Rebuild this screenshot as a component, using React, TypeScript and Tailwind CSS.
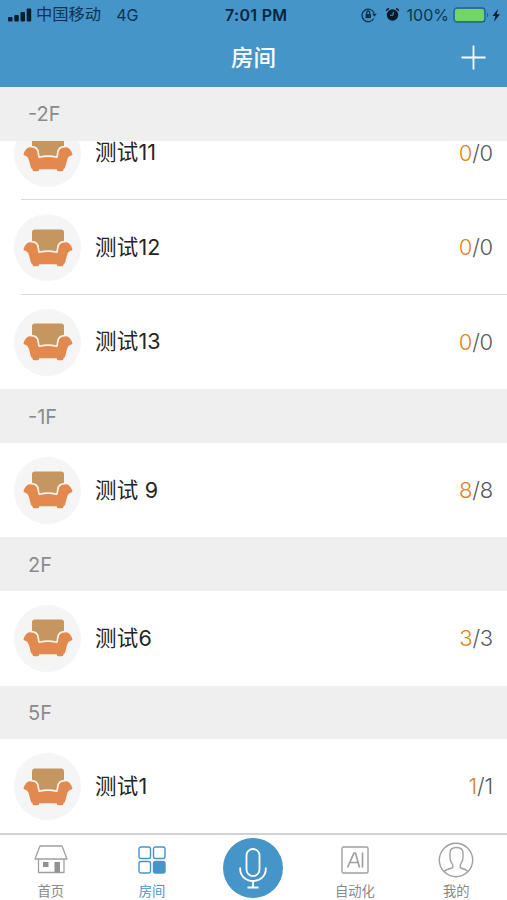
import React from 'react';

type Room = { name: string; on: number; total: number };

const floors: { floor: string; rooms: Room[] }[] = [
  {
    floor: '-2F',
    rooms: [
      { name: '测试11', on: 0, total: 0 },
      { name: '测试12', on: 0, total: 0 },
      { name: '测试13', on: 0, total: 0 },
    ],
  },
  { floor: '-1F', rooms: [{ name: '测试 9', on: 8, total: 8 }] },
  { floor: '2F', rooms: [{ name: '测试6', on: 3, total: 3 }] },
  { floor: '5F', rooms: [{ name: '测试1', on: 1, total: 1 }] },
];

const Armchair = () => (
  <svg width="50" height="38" viewBox="0 0 50 38">
    <path d="M12 0.500h26q3 0 3 3V16L34 24H16L9 16V3.500q0-3 3-3z" fill="#c69660" />
    <path
      d="M8.500 13C12.500 13 15 15.500 15.300 19q.2 2.500.9 4.300Q25 21 33.800 23.300q.7-1.800.9-4.300C35 15.500 37.500 13 41.500 13c4.500 0 7.200 3.500 8 8-3 .7-4.700 2-5.400 5l-2 7.500q-.3 1.200-1.300 1.300l-.6 1.700q-.3.700-1 .7h-4q-.8 0-1.100-.8l-.4-1.100H16.300l-.4 1.100q-.3.800-1.100.8h-4q-.7 0-1-.7l-.6-1.700q-1-.1-1.300-1.300L5.900 26c-.7-3-2.400-4.300-5.400-5 .8-4.500 3.500-8 8-8z"
      fill="#e1894e"
    />
    <path
      d="M7.500 12.700C12.500 12.500 15 15.500 15.300 19q.2 2.500.9 4.300Q25 21 33.800 23.300q.7-1.800.9-4.300C35 15.500 37.500 12.500 42.500 12.700"
      fill="none"
      stroke="#fdf3ea"
      strokeWidth="1.700"
      strokeLinejoin="round"
    />
  </svg>
);

const StatusBar = () => (
  <div className="relative flex h-[29px] items-center px-2 text-[15px] text-[#0c3350]">
    <svg width="24" height="14" viewBox="0 0 24 14" fill="#061d30">
      <rect x="0" y="9" width="4.500" height="4.500" rx="1" />
      <rect x="6.300" y="7" width="4.500" height="6.500" rx="1" />
      <rect x="12.500" y="4" width="4.500" height="9.500" rx="1" />
      <rect x="18.700" y="0.500" width="4.500" height="13" rx="1" />
    </svg>
    <span className="ml-[4px] text-[16.300px]">中国移动</span>
    <span className="ml-[15px] text-[16px]">4G</span>
    <span className="absolute left-[225px] text-[16px] font-semibold tracking-[0.3px] text-[#07263d]">7:01 PM</span>
    <div className="ml-auto flex items-center">
      <svg width="16" height="16" viewBox="0 0 16 16" fill="none" stroke="currentColor" strokeWidth="1.300">
        <path d="M12.800 11.500A6.300 6.300 0 1 1 13.300 6.500" />
        <path d="M11 6.800h4.800l-2.400 3z" fill="currentColor" stroke="none" />
        <rect x="4.500" y="7" width="5.500" height="4.200" fill="currentColor" stroke="none" />
        <path d="M5.700 7V5.500a1.500 1.500 0 0 1 3 0V7" />
      </svg>
      <svg className="ml-[8px]" width="15" height="15" viewBox="0 0 15 15">
        <circle cx="7.500" cy="8" r="5.700" fill="#07182a" />
        <path d="M1.300 4Q2 2 4 1.500M13.700 4Q13 2 11 1.500" stroke="#07182a" strokeWidth="1.400" fill="none" />
        <path d="M8.500 4.800L7.800 8.300H5" stroke="#4695c9" strokeWidth="1.100" fill="none" />
      </svg>
      <span className="ml-[7px] text-[16px]">100%</span>
      <svg className="-mr-[3px] ml-[4px]" width="49" height="16" viewBox="0 0 49 16">
        <rect x="1" y="1" width="31" height="14" rx="3" fill="none" stroke="#26618a" strokeWidth="1.300" />
        <rect x="2" y="2" width="29" height="12" rx="2" fill="#71d568" />
        <path d="M34 5.500q2.500 2.500 0 5z" fill="#26618a" />
        <path d="M45 2L39.500 9h3L41 14.500 47 7.300h-3.300z" fill="#07182a" />
      </svg>
    </div>
  </div>
);

const RoomRow: React.FC<{ room: Room; divider: boolean }> = ({ room, divider }) => (
  <div className="relative flex h-[94.5px] shrink-0 items-center bg-white pl-[14px] pr-[14px]">
    <div className="flex h-[67px] w-[67px] items-center justify-center rounded-full bg-[#f5f5f5]">
      <Armchair />
    </div>
    <span className="ml-[14px] pb-px text-[21.5px] tracking-[0.2px] whitespace-pre text-[#242424]">{room.name}</span>
    <span className="ml-auto text-[22px] font-light tracking-[-0.2px] text-[#58595c]">
      <span className="text-[#dd8423]">{room.on}</span>/{room.total}
    </span>
    {divider && <div className="absolute right-0 bottom-0 left-[21px] h-px bg-[#d9d9d9]" />}
  </div>
);

const HomeIcon = () => (
  <svg width="34" height="29" viewBox="0 0 34 29" fill="none" stroke="#a0a0a0" strokeWidth="1.300">
    <path d="M6 1h22l5 13H1zM4.500 14v13.500h25.500V14" strokeLinejoin="round" />
    <path d="M9 17h5.500v5H9zM20.500 17h5.500v10.500h-5.500z" fill="#929292" stroke="none" />
  </svg>
);

const RoomsIcon = () => (
  <svg width="28" height="28" viewBox="0 0 28 28" fill="none" stroke="#4695c9" strokeWidth="1.400">
    <rect x="1" y="1" width="11.500" height="11.500" rx="2" />
    <rect x="15.500" y="1" width="11.500" height="11.500" rx="2" />
    <rect x="1" y="15.500" width="11.500" height="11.500" rx="2" />
    <rect x="15.500" y="15.500" width="11.500" height="11.500" rx="2" fill="#4695c9" />
  </svg>
);

const AiIcon = () => (
  <svg width="28" height="28" viewBox="0 0 28 28" fill="none" stroke="#a0a0a0" strokeWidth="1.400">
    <rect x="1" y="1" width="26" height="26" rx="1.500" />
    <path d="M6.500 21.500L13 7h1.500l4 14.500M9 16.500h8M21.500 6.500v15" strokeWidth="1.700" />
  </svg>
);

const MeIcon = () => (
  <svg width="36" height="36" viewBox="0 0 36 36" fill="none" stroke="#a0a0a0" strokeWidth="1.400">
    <circle cx="18" cy="18" r="16.700" />
    <path d="M6 29.500c2-1.800 5-2.700 8-3.500.8-.3 1-1 .8-2.500-.2-2-2.800-3.500-2.800-8V11c0-3.500 2.500-5.500 6.500-5.500S25 7.500 25 11v4.500c0 4.500-2.600 6-2.800 8-.2 1.500 0 2.200.8 2.500 3 .8 5 1.700 7 3.500" />
  </svg>
);

const tabs = [
  { label: '首页', icon: <HomeIcon /> },
  { label: '房间', icon: <RoomsIcon />, active: true },
  { label: '', icon: null },
  { label: '自动化', icon: <AiIcon /> },
  { label: '我的', icon: <MeIcon /> },
];

const TabBar = () => (
  <nav className="grid h-[67px] shrink-0 grid-cols-5 border-t-2 border-[#d2d2d2] bg-white">
    {tabs.map((tab) =>
      tab.icon ? (
        <div key={tab.label} className="flex flex-col items-center">
          <div className="flex h-[49px] items-center">{tab.icon}</div>
          <span className={tab.active ? 'text-[13.3px] leading-[14px] text-[#4695c9]' : 'text-[13.3px] leading-[14px] text-[#888888]'}>
            {tab.label}
          </span>
        </div>
      ) : (
        <div key="voice" className="flex justify-center pt-[3px]">
          <div className="flex h-[60px] w-[60px] items-center justify-center rounded-full bg-[#4695c9]">
            <svg width="28" height="41" viewBox="0 0 28 41" fill="none" stroke="#fff" strokeWidth="1.800">
              <rect x="7.500" y="1" width="13" height="27" rx="6.500" />
              <path d="M1.200 19.500v1.500c0 7 5.500 12 12.800 12s12.800-5 12.800-12v-1.500M14 33v6.500M8.500 39.500h11" />
            </svg>
          </div>
        </div>
      ),
    )}
  </nav>
);

const App: React.FC = () => {
  return (
    <div className="flex h-[900px] w-[507px] flex-col overflow-hidden bg-white font-['Inter','Noto_Sans_CJK_SC',sans-serif]">
      <header className="h-[87px] shrink-0 bg-[#4695c9]">
        <StatusBar />
        <div className="grid h-[56px] grid-cols-3 items-center">
          <h1 className="col-start-2 pt-[2px] text-center text-[22.5px] font-medium text-white">房间</h1>
          <svg className="mr-[21px] justify-self-end" width="25" height="25" viewBox="0 0 25 25" stroke="#fff" strokeWidth="1.800">
            <path d="M12.500 0.500v24M0.500 12.500h24" />
          </svg>
        </div>
      </header>
      <main className="flex h-[746px] shrink-0 flex-col overflow-hidden">
        {floors.map(({ floor, rooms }, f) => (
          <section key={floor} className="shrink-0">
            <h2 className="flex h-[53.7px] items-center bg-[#efefef] pt-px pl-[28px] text-[20px] text-[#8b8b8b]">{floor}</h2>
            {rooms.map((room, i) => {
              const row = <RoomRow key={room.name} room={room} divider={i < rooms.length - 1} />;
              // the first row is scrolled partly under the sticky floor header
              return f === 0 && i === 0 ? (
                <div key={room.name} className="flex h-[59.6px] flex-col justify-end overflow-hidden">{row}</div>
              ) : (
                row
              );
            })}
          </section>
        ))}
      </main>
      <TabBar />
    </div>
  );
};

export default App;
